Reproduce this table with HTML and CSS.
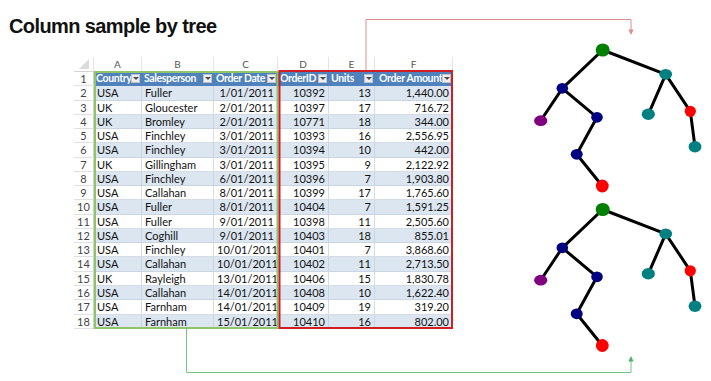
FILE: index.html
```html
<!DOCTYPE html>
<html lang="en">
<head>
    <meta charset="UTF-8">
    <title>Column sample by tree</title>
    <link rel="stylesheet" href="styles.css">
</head>
<body>

<div class="page">
    <div class="left">
        <h1 class="title">Column sample by tree</h1>

        <div class="sheet">
            <div class="row letters">
                <span class="corner"></span><span>A</span><span>B</span><span>C</span><span>D</span><span>E</span><span>F</span>
            </div>
            <div class="row head">
                <span class="rn">1</span>
                <span><b class="lbl">Country</b><i class="dd"></i></span>
                <span><b class="lbl">Salesperson</b><i class="dd"></i></span>
                <span><b class="lbl">Order Date</b><i class="dd"></i></span>
                <span><b class="lbl">OrderID</b><i class="dd"></i></span>
                <span><b class="lbl">Units</b><i class="dd"></i></span>
                <span><b class="lbl pad">Order Amount</b><i class="dd"></i></span>
            </div>
            <div class="row band"><span class="rn">2</span><span>USA</span><span>Fuller</span><span class="num">1/01/2011</span><span class="num">10392</span><span class="num">13</span><span class="num">1,440.00</span></div>
            <div class="row"><span class="rn">3</span><span>UK</span><span>Gloucester</span><span class="num">2/01/2011</span><span class="num">10397</span><span class="num">17</span><span class="num">716.72</span></div>
            <div class="row band"><span class="rn">4</span><span>UK</span><span>Bromley</span><span class="num">2/01/2011</span><span class="num">10771</span><span class="num">18</span><span class="num">344.00</span></div>
            <div class="row"><span class="rn">5</span><span>USA</span><span>Finchley</span><span class="num">3/01/2011</span><span class="num">10393</span><span class="num">16</span><span class="num">2,556.95</span></div>
            <div class="row band"><span class="rn">6</span><span>USA</span><span>Finchley</span><span class="num">3/01/2011</span><span class="num">10394</span><span class="num">10</span><span class="num">442.00</span></div>
            <div class="row"><span class="rn">7</span><span>UK</span><span>Gillingham</span><span class="num">3/01/2011</span><span class="num">10395</span><span class="num">9</span><span class="num">2,122.92</span></div>
            <div class="row band"><span class="rn">8</span><span>USA</span><span>Finchley</span><span class="num">6/01/2011</span><span class="num">10396</span><span class="num">7</span><span class="num">1,903.80</span></div>
            <div class="row"><span class="rn">9</span><span>USA</span><span>Callahan</span><span class="num">8/01/2011</span><span class="num">10399</span><span class="num">17</span><span class="num">1,765.60</span></div>
            <div class="row band"><span class="rn">10</span><span>USA</span><span>Fuller</span><span class="num">8/01/2011</span><span class="num">10404</span><span class="num">7</span><span class="num">1,591.25</span></div>
            <div class="row"><span class="rn">11</span><span>USA</span><span>Fuller</span><span class="num">9/01/2011</span><span class="num">10398</span><span class="num">11</span><span class="num">2,505.60</span></div>
            <div class="row band"><span class="rn">12</span><span>USA</span><span>Coghill</span><span class="num">9/01/2011</span><span class="num">10403</span><span class="num">18</span><span class="num">855.01</span></div>
            <div class="row"><span class="rn">13</span><span>USA</span><span>Finchley</span><span class="num">10/01/2011</span><span class="num">10401</span><span class="num">7</span><span class="num">3,868.60</span></div>
            <div class="row band"><span class="rn">14</span><span>USA</span><span>Callahan</span><span class="num">10/01/2011</span><span class="num">10402</span><span class="num">11</span><span class="num">2,713.50</span></div>
            <div class="row"><span class="rn">15</span><span>UK</span><span>Rayleigh</span><span class="num">13/01/2011</span><span class="num">10406</span><span class="num">15</span><span class="num">1,830.78</span></div>
            <div class="row band"><span class="rn">16</span><span>USA</span><span>Callahan</span><span class="num">14/01/2011</span><span class="num">10408</span><span class="num">10</span><span class="num">1,622.40</span></div>
            <div class="row"><span class="rn">17</span><span>USA</span><span>Farnham</span><span class="num">14/01/2011</span><span class="num">10409</span><span class="num">19</span><span class="num">319.20</span></div>
            <div class="row band"><span class="rn">18</span><span>USA</span><span>Farnham</span><span class="num">15/01/2011</span><span class="num">10410</span><span class="num">16</span><span class="num">802.00</span></div>
        </div>
    </div>

    <!-- two copies of the same tree, coordinates are page pixels -->
    <svg class="trees" viewBox="520 0 191 381" width="191" height="381">
        <defs>
            <g id="tree">
                <g stroke="#000" stroke-width="3" stroke-linecap="round">
                    <line x1="602.7" y1="50" x2="562.3" y2="88.3"/>
                    <line x1="602.7" y1="50" x2="665.7" y2="74.3"/>
                    <line x1="562.3" y1="88.3" x2="541.5" y2="119.5"/>
                    <line x1="562.3" y1="88.3" x2="597" y2="117.3"/>
                    <line x1="597" y1="117.3" x2="576.7" y2="154.3"/>
                    <line x1="576.7" y1="154.3" x2="602.3" y2="186"/>
                    <line x1="665.7" y1="74.3" x2="648.3" y2="114.3"/>
                    <line x1="665.7" y1="74.3" x2="690.3" y2="111.3"/>
                    <line x1="690.3" y1="111.3" x2="695" y2="146.7"/>
                </g>
                <ellipse cx="602.7" cy="50" rx="7" ry="6.6" fill="#008000"/>
                <ellipse cx="562.3" cy="88.3" rx="5.8" ry="5.4" fill="#000080"/>
                <ellipse cx="540.7" cy="120.7" rx="6.6" ry="5.4" fill="#800080"/>
                <ellipse cx="597" cy="117.3" rx="5.8" ry="5.4" fill="#000080"/>
                <ellipse cx="576.7" cy="154.3" rx="6" ry="5.4" fill="#000080"/>
                <ellipse cx="602.3" cy="186" rx="6.4" ry="6.4" fill="#ff0000"/>
                <ellipse cx="665.7" cy="74.3" rx="6.4" ry="5.4" fill="#008080"/>
                <ellipse cx="648.3" cy="114.3" rx="6.6" ry="5.7" fill="#008080"/>
                <ellipse cx="690.3" cy="111.3" rx="5.6" ry="5.6" fill="#ff0000"/>
                <ellipse cx="695" cy="146.7" rx="6.4" ry="5.7" fill="#008080"/>
            </g>
        </defs>
        <use href="#tree"/>
        <use href="#tree" y="159.5"/>
    </svg>

    <!-- highlight boxes and connector arrows drawn over the sheet -->
    <svg class="overlay" viewBox="0 0 711 381" width="711" height="381">
        <rect x="95" y="72" width="182.5" height="256" fill="none" stroke="#8ec46a" stroke-width="2"/>
        <rect x="279.5" y="71" width="172.5" height="257" fill="none" stroke="#cf1f24" stroke-width="2"/>

        <path d="M366 70 V19.5 H631 V30" fill="none" stroke="#dc8e90" stroke-width="1"/>
        <polygon points="628.3,29.5 633.7,29.5 631,35" fill="#dc8e90"/>

        <path d="M186.5 329 V372.5 H631 V361" fill="none" stroke="#76c387" stroke-width="1"/>
        <polygon points="628.3,361.5 633.7,361.5 631,356" fill="#4fb36a"/>
    </svg>
</div>

</body>
</html>
```

FILE: styles.css
```css
:root {
    --cols: 20px 48px 72px 64px 51px 46px 78px;
    --head-blue: #4f81bd;
    --band-blue: #dce6f1;
    --grid: #d5dce5;
    --sheet-text: #111111;
}

* {
    box-sizing: border-box;
    margin: 0;
    padding: 0;
}

body {
    font-family: "Liberation Sans", Arial, sans-serif;
    background-color: #ffffff;
}

.page {
    position: relative;
    display: flex;
    width: 711px;
    height: 381px;
    overflow: hidden;
}

.left {
    width: 520px;
    flex: none;
}

.title {
    margin: 14px 0 0 9px;
    font-size: 20px;
    line-height: 24px;
    font-weight: 700;
    letter-spacing: -0.6px;
    color: #111111;
}

.sheet {
    margin: 19px 0 0 74px;
    width: 379px;
    font-family: Lato, "Liberation Sans", sans-serif;
    font-size: 11px;
    color: var(--sheet-text);
}

.row {
    display: grid;
    grid-template-columns: var(--cols);
    height: 14.27px;
}

.row > span {
    border-right: 1px solid var(--grid);
    border-bottom: 1px solid var(--grid);
    padding: 0 3px;
    line-height: 13px;
    white-space: nowrap;
    overflow: hidden;
}

.row.band > span {
    background-color: var(--band-blue);
    border-color: #c9d5e3;
}

.num {
    text-align: right;
}

.row > .rn {
    background-color: #ffffff;
    color: #444444;
    text-align: center;
    padding: 0;
    border-color: #e0e0e0;
    border-right-color: #d0d0d0;
}

.row.band > .rn {
    background-color: #ffffff;
    border-color: #e0e0e0;
    border-right-color: #d0d0d0;
}

/* column letters */
.letters {
    height: 15px;
}

.letters > span {
    text-align: center;
    color: #555555;
    font-size: 10px;
    line-height: 14px;
    border-right-color: #e4e4e4;
    border-bottom-color: #d4d4d4;
}

.letters > .corner {
    position: relative;
}

.corner::after {
    content: "";
    position: absolute;
    right: 4px;
    bottom: 2px;
    border-left: 10px solid transparent;
    border-bottom: 10px solid #dcdcdc;
}

/* table header */
.head > span {
    display: flex;
    align-items: center;
    padding: 0 1px 0 2px;
    background-color: var(--head-blue);
    border-color: var(--head-blue);
    color: #ffffff;
}

.head > .rn {
    display: block;
}

.lbl {
    flex: 1;
    min-width: 0;
    overflow: hidden;
    font-size: 10.5px;
    font-weight: 700;
    letter-spacing: -0.35px;
}

.lbl.pad {
    padding-left: 2px;
}

.dd {
    position: relative;
    flex: none;
    width: 9px;
    height: 9px;
    background-color: #eeeeee;
    border: 1px solid #b9c4d0;
}

.dd::after {
    content: "";
    position: absolute;
    left: 1px;
    top: 2px;
    border-left: 3px solid transparent;
    border-right: 3px solid transparent;
    border-top: 3px solid #4a4a4a;
}

.trees {
    flex: none;
    display: block;
}

.overlay {
    position: absolute;
    left: 0;
    top: 0;
    pointer-events: none;
}
```
